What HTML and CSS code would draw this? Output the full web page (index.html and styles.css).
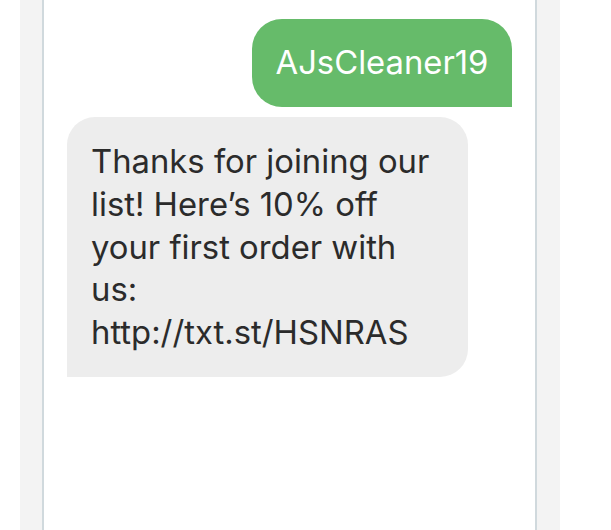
FILE: index.html
```html
<!DOCTYPE html>
<html>
<head>
<meta charset="utf-8">
<link rel="stylesheet" href="styles.css">
</head>
<body>
<div class="page">
  <div class="frame">
    <div class="screen">
      <div class="msg out">AJsCleaner19</div>
      <div class="msg in">Thanks for joining our<br>list! Here’s 10% off<br>your first order with<br>us:<br>http://txt.st/HSNRAS</div>
    </div>
  </div>
</div>
</body>
</html>
```

FILE: styles.css
```css
html, body {
  margin: 0;
  padding: 0;
  background: #ffffff;
  overflow: hidden;
}
.page {
  display: flex;
  padding-left: 20px;
  height: 530px;
}
.frame {
  width: 540px;
  background: #f3f3f3;
  padding: 0 23px 0 22px;
  box-sizing: border-box;
}
.screen {
  height: 100%;
  background: #ffffff;
  border-left: 2px solid #d0d9dd;
  border-right: 2px solid #d0d9dd;
  padding: 19px 23px 0 23px;
  display: flex;
  flex-direction: column;
  gap: 10px;
  font-family: Inter, "Open Sans", sans-serif;
}
.msg {
  font-size: 32.8px;
  line-height: 42.75px;
  white-space: nowrap;
}
.out {
  align-self: flex-end;
  background: #66bb6a;
  color: #ffffff;
  height: 88px;
  box-sizing: border-box;
  padding: 0 20px 2px;
  display: flex;
  align-items: center;
  width: 260px;
  justify-content: center;
  border-radius: 30px 30px 0 30px;
}
.in {
  align-self: flex-start;
  background: #ededed;
  color: #2b2b2b;
  width: 401px;
  box-sizing: border-box;
  padding: 23px 20px 23px 24px;
  border-radius: 28px 28px 28px 0;
}
```
